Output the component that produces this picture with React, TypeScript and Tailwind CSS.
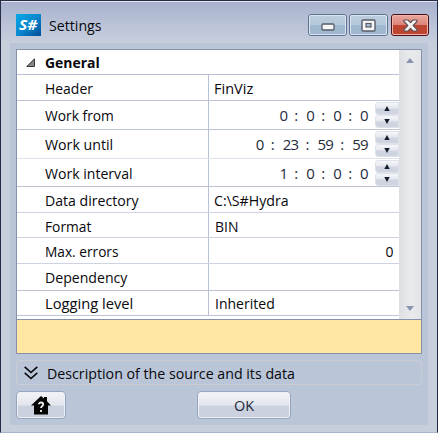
import type { ReactNode } from "react";

const timeRows = [
  { label: "Work from", fit: "scale-x-[0.92]", parts: ["0", "0", "0", "0"], height: "h-[29px]", line: "border-[#bcc4d6]" },
  { label: "Work until", fit: "scale-x-[0.945]", parts: ["0", "23", "59", "59"], height: "h-[29px]", line: "border-[#dfe3ec]" },
  { label: "Work interval", fit: "scale-x-[0.938]", parts: ["1", "0", "0", "0"], height: "h-[28px]", line: "border-[#bcc4d6]" },
];

function Label({ children, fit = "scale-x-[0.93]", right = false }: { children: ReactNode; fit?: string; right?: boolean }) {
  return (
    <span className={`inline-block whitespace-nowrap ${fit} ${right ? "origin-right" : "origin-left"}`}>
      {children}
    </span>
  );
}

interface RowProps {
  label: string;
  height: string;
  line?: string;
  fit?: string;
  pad?: string;
  children?: ReactNode;
}

function Row({ label, height, line = "border-[#bcc4d6]", fit, pad = "", children }: RowProps) {
  return (
    <div className={`flex border-b ${height} ${line}`}>
      <div className={`flex w-[192px] shrink-0 items-center border-r border-[#b8c1d5] pl-[28px] ${pad}`}>
        <Label fit={fit}>{label}</Label>
      </div>
      <div className={`flex min-w-0 flex-1 items-center ${pad}`}>{children}</div>
    </div>
  );
}

function Spinner() {
  return (
    <div className="flex h-[26px] w-[24px] shrink-0 flex-col">
      {["M5 0L7.7 5H2.3Z", "M2.3 0H7.7L5 5Z"].map((d) => (
        <div key={d} className="flex flex-1 items-center justify-center rounded-l-[3px] border border-[#dde1e9] bg-linear-to-b from-[#f6f7fa] from-0% via-[#e4e7ee] via-45% to-[#cfd4e0] to-55%">
          <svg width="10" height="5" viewBox="0 0 10 5"><path d={d} fill="#151c30" /></svg>
        </div>
      ))}
    </div>
  );
}

function TimeValue({ parts }: { parts: string[] }) {
  return (
    <>
      <div className="flex flex-1 justify-end pr-[7px] text-[#252b3d]">
        {parts.map((p, i) => (
          <span key={i} className="flex">
            {i > 0 && <span className="w-[19px] pr-[1px] text-center">:</span>}
            <span className="tracking-[-0.7px]">{p}</span>
          </span>
        ))}
      </div>
      <Spinner />
    </>
  );
}

function CaptionButton({ children, close = false }: { children: ReactNode; close?: boolean }) {
  return (
    <div className={`flex h-[22px] items-center justify-center rounded-[3px] border ${close ? "w-[38px] border-[#4c1019] bg-linear-to-b from-[#e9a89d] from-0% via-[#dc8478] via-50% to-[#c96552]" : "w-[39px] border-[#5f7390] bg-linear-to-b from-[#bdcddd] via-[#b4c9dc] to-[#adc5da]"}`}>
      <div className={`flex h-full w-full items-center justify-center rounded-[2px] border ${close ? "border-[#efb5a8] bg-linear-to-b from-transparent from-50% to-[#bd4532] to-50%" : "border-[#dae6ef] bg-linear-to-b from-transparent from-50% to-[#9fb8cf] to-50%"}`}>
        {children}
      </div>
    </div>
  );
}

export default function App() {
  return (
    <div className="flex h-[433px] w-[438px] flex-col overflow-hidden border border-t-[#292c46] border-r-[#1c2942] border-b-[#aab4cf] border-l-[#292c46] bg-[#c7cfdd] font-['Open_Sans','Noto_Sans',sans-serif] text-[15px] leading-[20px] text-[#08080c]">
      <header className="flex h-[42px] shrink-0 items-start border-t border-[#e1e5f0] bg-linear-to-b from-[#a8b2cf] to-[#c7cfdd] pl-[15px] pr-[8px] pt-[12px]">
        <div className="flex h-[22px] w-[25px] items-center justify-center bg-linear-to-br from-[#07a8e7] via-[#0a88cf] to-[#034c96] text-[14px] font-bold italic text-white">
          <span className="inline-block scale-x-[1.12]">S#</span>
        </div>
        <span className="ml-[8px] mt-[1px] flex-1"><Label fit="scale-x-[0.945]">Settings</Label></span>
        <div className="flex">
          <CaptionButton>
            <svg className="mt-[4px]" width="14" height="8" viewBox="0 0 14 8"><rect x="1" y="1" width="12" height="6" rx="1" fill="#f5f5f5" stroke="#585c68" strokeWidth="1.3" /></svg>
          </CaptionButton>
          <div className="w-[2px]" />
          <CaptionButton>
            <svg width="15" height="13" viewBox="0 0 15 13"><rect x="1" y="1" width="13" height="11" rx="1" fill="#f6f6f6" stroke="#585c68" strokeWidth="1.4" /><rect x="5" y="4.5" width="5" height="3.5" fill="#a9bdd3" stroke="#585c68" strokeWidth="1.2" /></svg>
          </CaptionButton>
          <div className="w-[3px]" />
          <CaptionButton close>
            <svg width="15" height="13" viewBox="0 0 15 13"><path d="M1 1H5L7.5 3.7L10 1H14V2.5L10.2 6.5L14 10.5V12H10L7.5 9.3L5 12H1V10.5L4.8 6.5L1 2.5Z" fill="#f7f5f5" stroke="#625158" strokeWidth="1.2" strokeLinejoin="round" /></svg>
          </CaptionButton>
        </div>
      </header>

      <main className="ml-[9px] flex h-[382px] w-[418px] shrink-0 flex-col bg-[#bac6d8] pl-[6px] pt-[6px]">
        <section className="flex h-[305px] w-[406px] shrink-0 flex-col border border-[#8791aa]">
          <div className="flex h-[269px] shrink-0 bg-white">
            <div className="flex w-[382px] flex-col">
              <div className="flex h-[25px] items-center border-b border-[#b8c1d5] pl-[9px] font-bold">
                <svg width="9" height="9" viewBox="0 0 9 9" className="mr-[10px]"><path d="M8.5 .8V8.5H.8Z" fill="#858585" stroke="#383838" /></svg>
                <Label>General</Label>
              </div>
              <Row label="Header" height="h-[26px]"><span className="pl-[5px]"><Label fit="scale-x-[0.97]">FinViz</Label></span></Row>
              {timeRows.map((row) => (
                <Row key={row.label} label={row.label} fit={row.fit} height={row.height} line={row.line}><TimeValue parts={row.parts} /></Row>
              ))}
              <Row label="Data directory" fit="scale-x-[0.94]" height="h-[26px]" line="border-[#cdd3e0]"><span className="pl-[5px]"><Label fit="scale-x-[0.945]">C:\S#Hydra</Label></span></Row>
              <Row label="Format" fit="scale-x-[0.92]" pad="pt-[2px]" height="h-[25px]" line="border-[#cdd3e0]"><span className="pl-[6px]"><Label>BIN</Label></span></Row>
              <Row label="Max. errors" fit="scale-x-[0.913]" height="h-[26px]" line="border-[#cdd3e0]"><span className="ml-auto pr-[5px]"><Label right>0</Label></span></Row>
              <Row label="Dependency" fit="scale-x-[0.94]" height="h-[27px]" />
              <Row label="Logging level" fit="scale-x-[0.98]" height="h-[25px]"><span className="pl-[6px]"><Label fit="scale-x-[0.935]">Inherited</Label></span></Row>
            </div>
            <div className="flex w-[22px] flex-col items-center justify-between bg-linear-to-r from-[#dedfe2] via-[#e9eaec] to-[#e4e5e8] pb-[8px] pt-[8px]">
              <svg width="8" height="5" viewBox="0 0 8 5"><path d="M4 0L8 5H0Z" fill="#8995ae" /></svg>
              <svg width="8" height="5" viewBox="0 0 8 5"><path d="M0 0H8L4 5Z" fill="#8995ae" /></svg>
            </div>
          </div>
          <div className="flex-1 border-t border-[#8791aa] bg-[#ffe6a2]" />
        </section>

        <div className="mt-[6px] flex h-[25px] w-[406px] shrink-0 items-center rounded-[4px] border border-[#cccdd4] pl-[7px]">
          <svg width="14" height="14" viewBox="0 0 14 14" fill="none" stroke="#08080c" strokeWidth="1.6"><path d="M.7 .8L7 6.5L13.3 .8M.7 6.8L7 12.5L13.3 6.8" /></svg>
          <span className="ml-[9px]"><Label fit="scale-x-[0.947]">Description of the source and its data</Label></span>
        </div>

        <footer className="mt-[6px] flex h-[28px] shrink-0">
          <button className="flex w-[50px] items-center justify-center rounded-[4px] border border-[#98a5c0] bg-linear-to-b from-[#f3f4f7] from-0% via-[#e2e5ec] via-50% to-[#cbd1de] to-55% shadow-[inset_0_0_0_1px_#edf0f5]">
            <svg width="20" height="19" viewBox="0 0 20 19"><path d="M10 0L13 2.6V1H16V5.3L20 9.5H17V18.5H3V9.5H0Z" fill="#050505" /><path d="M7.8 8.2C7.8 5.9 12.2 5.9 12.2 8.4C12.2 10.1 10 10.2 10 12.1M10 14V16" fill="none" stroke="#eef0f4" strokeWidth="1.8" /></svg>
          </button>
          <button className="ml-[131px] flex w-[94px] items-center justify-center rounded-[4px] border border-[#98a5c0] bg-linear-to-b from-[#f3f4f7] from-0% via-[#e2e5ec] via-50% to-[#cbd1de] to-55% text-[#20283c] shadow-[inset_0_0_0_1px_#edf0f5]">
            <Label fit="scale-x-[0.96]">OK</Label>
          </button>
        </footer>
      </main>
    </div>
  );
}
